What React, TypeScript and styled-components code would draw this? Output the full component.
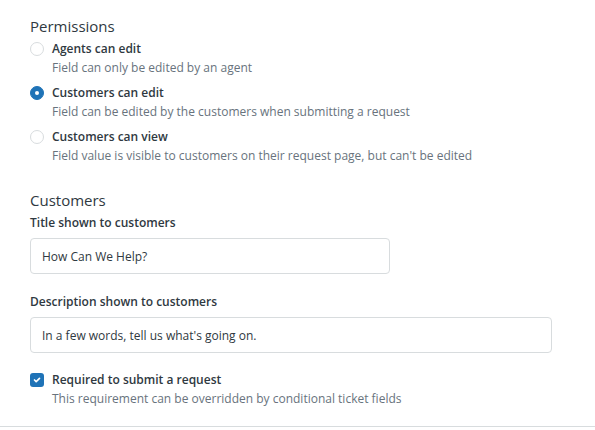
import React from "react";
import styled, { createGlobalStyle } from "styled-components";

const Global = createGlobalStyle`
  html, body { margin: 0; padding: 0; background: #fff; }
  body { font-family: "Open Sans", "Noto Sans", sans-serif; color: #2f3941; }
  * { box-sizing: border-box; }
`;

const Page = styled.div`
  width: 595px;
  height: 427px;
  display: flex;
  flex-direction: column;
  padding: 15px 0 0 30px;
  border-bottom: 1px solid #d8dcde;
  overflow: hidden;
`;

const SectionTitle = styled.h2<{ $gap?: number }>`
  margin: 0 0 ${(p) => p.$gap ?? 0}px;
  font-size: 15px;
  font-weight: 400;
  line-height: 22px;
  color: #2f3941;
`;

const OptionList = styled.div`
  display: flex;
  flex-direction: column;
  gap: 6px;
  margin-top: 2px;
`;

const Option = styled.label`
  display: grid;
  grid-template-columns: 14px 1fr;
  column-gap: 8px;
  align-items: start;
`;

const Radio = styled.span<{ $checked?: boolean }>`
  width: 14px;
  height: 14px;
  margin-top: 3px;
  border-radius: 50%;
  border: 1px solid ${(p) => (p.$checked ? "#1f73b7" : "#d8dcde")};
  background: ${(p) => (p.$checked ? "#1f73b7" : "#fff")};
  display: flex;
  align-items: center;
  justify-content: center;
  &::after {
    content: "";
    width: 4px;
    height: 4px;
    border-radius: 50%;
    background: ${(p) => (p.$checked ? "#fff" : "transparent")};
  }
`;

const Box = styled.span`
  width: 14px;
  height: 14px;
  margin-top: 3px;
  border-radius: 3px;
  background: #1f73b7;
  display: flex;
  align-items: center;
  justify-content: center;
`;

const Texts = styled.div`
  display: flex;
  flex-direction: column;
`;

const OptLabel = styled.span`
  font-size: 12px;
  font-weight: 600;
  line-height: 19px;
  color: #2f3941;
`;

const Hint = styled.span`
  font-size: 12px;
  font-weight: 400;
  line-height: 19px;
  color: #68737d;
`;

const Section = styled.div<{ $top: number }>`
  display: flex;
  flex-direction: column;
  margin-top: ${(p) => p.$top}px;
`;

const FieldLabel = styled.div`
  font-size: 12px;
  font-weight: 600;
  line-height: 19px;
  color: #2f3941;
`;

const Input = styled.div<{ $width: number }>`
  width: ${(p) => p.$width}px;
  height: 36px;
  margin-top: 6px;
  border: 1px solid #d8dcde;
  border-radius: 4px;
  padding: 0 11px;
  display: flex;
  align-items: center;
  font-size: 12px;
  color: #2f3941;
`;

const Check = () => (
  <svg width="10" height="10" viewBox="0 0 12 12" fill="none">
    <path d="M3 6l2 2 4-4" stroke="#fff" strokeWidth="2" strokeLinecap="round" strokeLinejoin="round" />
  </svg>
);

const options = [
  { label: "Agents can edit", hint: "Field can only be edited by an agent", checked: false },
  { label: "Customers can edit", hint: "Field can be edited by the customers when submitting a request", checked: true },
  { label: "Customers can view", hint: "Field value is visible to customers on their request page, but can't be edited", checked: false },
];

export default function App() {
  return (
    <>
      <Global />
      <Page>
        <SectionTitle>Permissions</SectionTitle>
        <OptionList>
          {options.map((o) => (
            <Option key={o.label}>
              <Radio $checked={o.checked} />
              <Texts>
                <OptLabel>{o.label}</OptLabel>
                <Hint>{o.hint}</Hint>
              </Texts>
            </Option>
          ))}
        </OptionList>
        <Section $top={24}>
          <SectionTitle $gap={2}>Customers</SectionTitle>
          <FieldLabel>Title shown to customers</FieldLabel>
          <Input $width={360}>How Can We Help?</Input>
        </Section>
        <Section $top={18}>
          <FieldLabel>Description shown to customers</FieldLabel>
          <Input $width={522}>In a few words, tell us what's going on.</Input>
        </Section>
        <Section $top={17}>
          <Option>
            <Box><Check /></Box>
            <Texts>
              <OptLabel>Required to submit a request</OptLabel>
              <Hint>This requirement can be overridden by conditional ticket fields</Hint>
            </Texts>
          </Option>
        </Section>
      </Page>
    </>
  );
}
